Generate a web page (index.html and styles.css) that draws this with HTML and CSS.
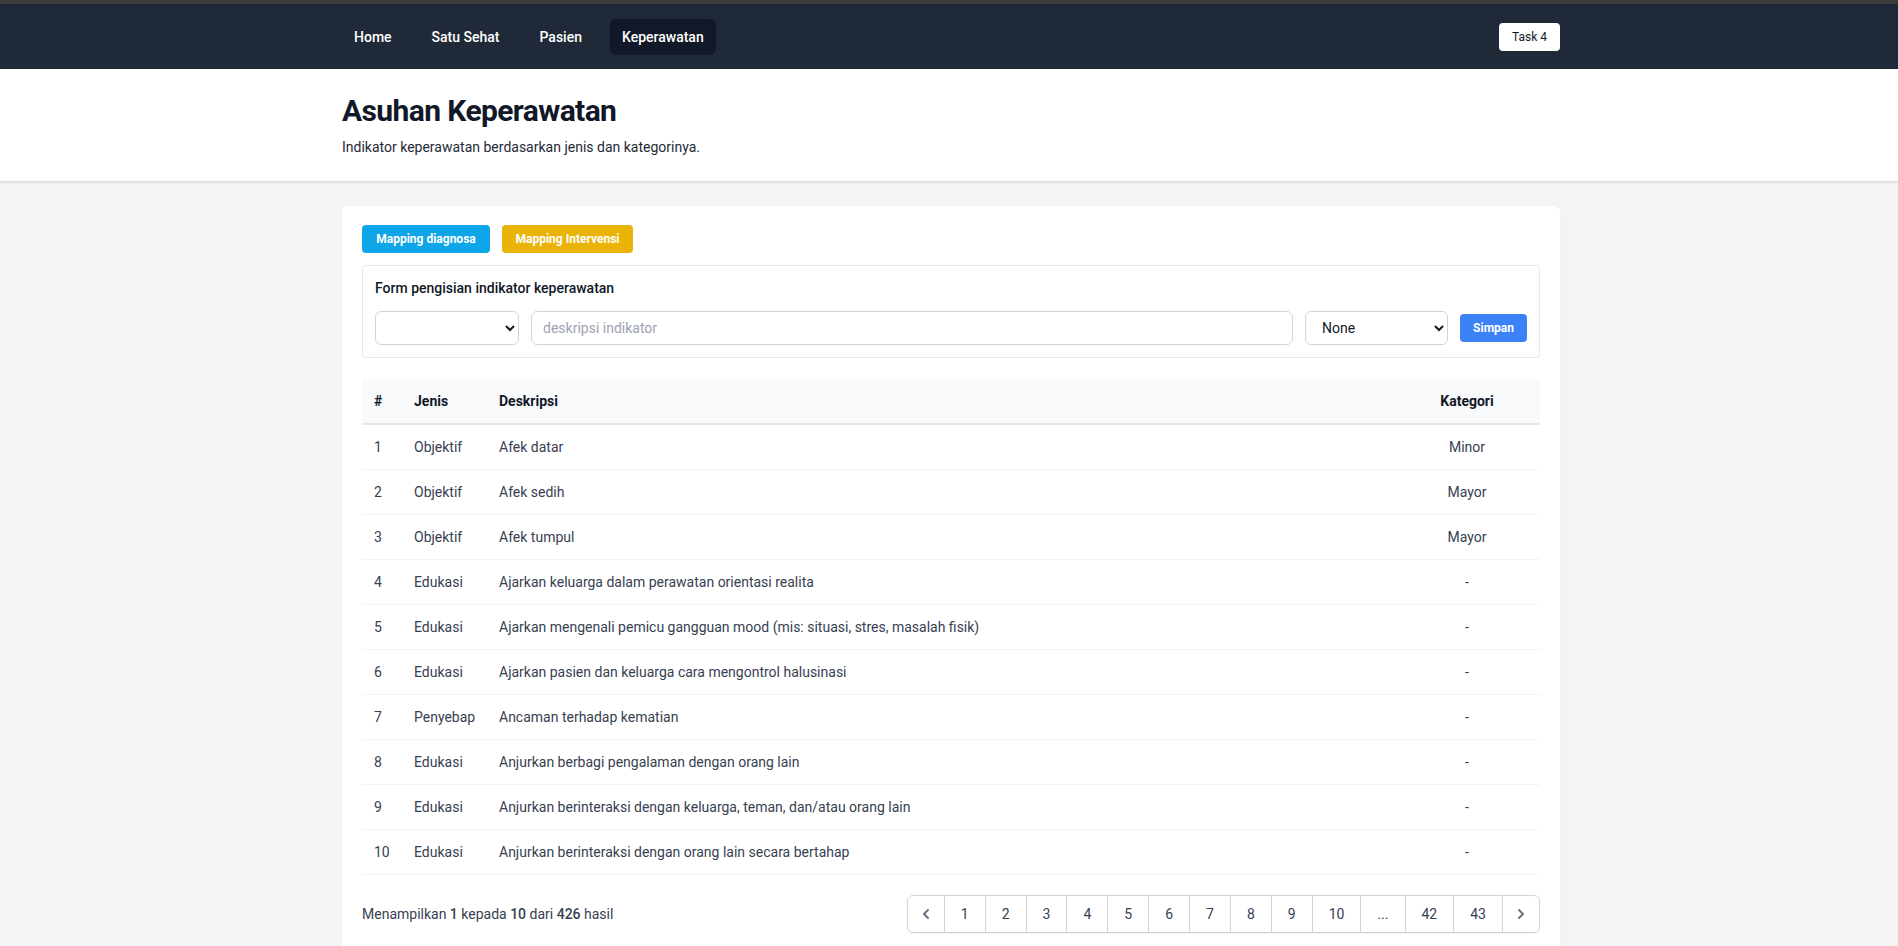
FILE: index.html
```html
<!DOCTYPE html>
<html lang="id">
<head>
<meta charset="utf-8">
<title>Asuhan Keperawatan</title>
<link rel="stylesheet" href="styles.css">
</head>
<body>
<div class="topstrip"></div>
<nav class="navbar">
  <div class="container nav-inner">
    <div class="nav-links">
      <a class="nav-link" href="#">Home</a>
      <a class="nav-link" href="#">Satu Sehat</a>
      <a class="nav-link" href="#">Pasien</a>
      <a class="nav-link active" href="#">Keperawatan</a>
    </div>
    <button class="task-btn">Task 4</button>
  </div>
</nav>
<header class="page-header">
  <div class="container header-inner">
    <h1>Asuhan Keperawatan</h1>
    <p>Indikator keperawatan berdasarkan jenis dan kategorinya.</p>
  </div>
</header>
<main class="main">
  <div class="container">
    <div class="card">
      <div class="btn-row">
        <button class="btn btn-sky">Mapping diagnosa</button>
        <button class="btn btn-yellow">Mapping Intervensi</button>
      </div>
      <div class="form-box">
        <div class="form-title">Form pengisian indikator keperawatan</div>
        <div class="form-row">
          <select class="select select-jenis"><option></option></select>
          <input class="input" type="text" placeholder="deskripsi indikator">
          <select class="select select-kat"><option>None</option></select>
          <button class="btn btn-blue">Simpan</button>
        </div>
      </div>
      <table class="table">
        <thead>
          <tr>
            <th class="col-no">#</th>
            <th class="col-jenis">Jenis</th>
            <th>Deskripsi</th>
            <th class="col-kat">Kategori</th>
          </tr>
        </thead>
        <tbody>
          <tr><td>1</td><td>Objektif</td><td>Afek datar</td><td class="center">Minor</td></tr>
          <tr><td>2</td><td>Objektif</td><td>Afek sedih</td><td class="center">Mayor</td></tr>
          <tr><td>3</td><td>Objektif</td><td>Afek tumpul</td><td class="center">Mayor</td></tr>
          <tr><td>4</td><td>Edukasi</td><td>Ajarkan keluarga dalam perawatan orientasi realita</td><td class="center">-</td></tr>
          <tr><td>5</td><td>Edukasi</td><td>Ajarkan mengenali pemicu gangguan mood (mis: situasi, stres, masalah fisik)</td><td class="center">-</td></tr>
          <tr><td>6</td><td>Edukasi</td><td>Ajarkan pasien dan keluarga cara mengontrol halusinasi</td><td class="center">-</td></tr>
          <tr><td>7</td><td>Penyebap</td><td>Ancaman terhadap kematian</td><td class="center">-</td></tr>
          <tr><td>8</td><td>Edukasi</td><td>Anjurkan berbagi pengalaman dengan orang lain</td><td class="center">-</td></tr>
          <tr><td>9</td><td>Edukasi</td><td>Anjurkan berinteraksi dengan keluarga, teman, dan/atau orang lain</td><td class="center">-</td></tr>
          <tr><td>10</td><td>Edukasi</td><td>Anjurkan berinteraksi dengan orang lain secara bertahap</td><td class="center">-</td></tr>
        </tbody>
      </table>
      <div class="pager-row">
        <p class="pager-info">Menampilkan <span class="strong">1</span> kepada <span class="strong">10</span> dari <span class="strong">426</span> hasil</p>
        <div class="pager">
          <span class="pg pg-arrow pg-first">
            <svg viewBox="0 0 20 20" width="20" height="20" fill="currentColor"><path fill-rule="evenodd" d="M12.707 5.293a1 1 0 010 1.414L9.414 10l3.293 3.293a1 1 0 01-1.414 1.414l-4-4a1 1 0 010-1.414l4-4a1 1 0 011.414 0z" clip-rule="evenodd"/></svg>
          </span>
          <span class="pg">1</span>
          <span class="pg">2</span>
          <span class="pg">3</span>
          <span class="pg">4</span>
          <span class="pg">5</span>
          <span class="pg">6</span>
          <span class="pg">7</span>
          <span class="pg">8</span>
          <span class="pg">9</span>
          <span class="pg">10</span>
          <span class="pg">...</span>
          <span class="pg">42</span>
          <span class="pg">43</span>
          <span class="pg pg-arrow pg-last">
            <svg viewBox="0 0 20 20" width="20" height="20" fill="currentColor"><path fill-rule="evenodd" d="M7.293 14.707a1 1 0 010-1.414L10.586 10 7.293 6.707a1 1 0 011.414-1.414l4 4a1 1 0 010 1.414l-4 4a1 1 0 01-1.414 0z" clip-rule="evenodd"/></svg>
          </span>
        </div>
      </div>
    </div>
  </div>
</main>
</body>
</html>
```
FILE: styles.css
```css
* { box-sizing: border-box; }
html, body { margin: 0; padding: 0; }
body {
  font-family: Roboto, "Liberation Sans", Arial, sans-serif;
  background: #f3f4f6;
  color: #111827;
  font-size: 14px;
  line-height: 20px;
}
.container {
  max-width: 1280px;
  margin: 0 auto;
  padding: 0 29px 0 33px;
}
.topstrip { height: 4px; background: #3c3c3c; }
.navbar { background: #1f2937; }
.nav-inner {
  height: 65px;
  display: flex;
  align-items: center;
  justify-content: space-between;
}
.nav-links { display: flex; gap: 16px; }
.nav-link {
  color: #ffffff;
  text-decoration: none;
  font-size: 14px;
  line-height: 20px;
  font-weight: 500;
  padding: 8px 12px;
  border-radius: 6px;
}
.nav-link.active { background: #111827; }
.task-btn {
  background: #ffffff;
  color: #111827;
  border: 0;
  border-radius: 4px;
  font-family: inherit;
  font-size: 12px;
  line-height: 16px;
  padding: 6px 0;
  height: 28px;
  width: 61px;
}
.page-header {
  background: #ffffff;
  box-shadow: 0 1px 3px rgba(0,0,0,0.1), 0 1px 2px rgba(0,0,0,0.06);
}
.header-inner { padding-top: 24px; padding-bottom: 24px; }
.page-header h1 {
  margin: 0;
  font-size: 30px;
  line-height: 36px;
  font-weight: 700;
  color: #111827;
  letter-spacing: -0.6px;
}
.page-header p {
  margin: 8px 0 0;
  font-size: 14px;
  line-height: 20px;
  color: #1f2937;
}
.main { padding: 25px 0 24px; }
.card {
  background: #ffffff;
  border-radius: 6px;
  box-shadow: 0 1px 2px rgba(0,0,0,0.05);
  padding: 19px 20px 20px;
}
.btn-row { display: flex; gap: 12px; }
.btn {
  border: 0;
  border-radius: 4px;
  color: #ffffff;
  font-family: inherit;
  font-size: 12px;
  line-height: 16px;
  font-weight: 700;
  padding: 6px 0;
  height: 28px;
  white-space: nowrap;
}
.btn-sky { background: #0ea5e9; width: 128px; }
.btn-yellow { background: #eab308; width: 131px; }
.btn-blue { background: #3b82f6; width: 67px; }
.form-box {
  margin-top: 12px;
  border: 1px solid #e5e7eb;
  border-radius: 4px;
  padding: 12px;
}
.form-title {
  font-size: 14px;
  line-height: 20px;
  font-weight: 500;
  color: #111827;
}
.form-row {
  margin-top: 13px;
  display: flex;
  align-items: center;
  gap: 12px;
}
.select {
  height: 34px;
  border: 1px solid #d1d5db;
  border-radius: 6px;
  background: #ffffff;
  font-family: inherit;
  font-size: 14px;
  color: #111827;
  padding: 0 6px 0 12px;
}
.select-jenis { width: 144px; }
.select-kat { width: 143px; }
.input {
  flex: 1;
  height: 34px;
  border: 1px solid #d1d5db;
  border-radius: 6px;
  padding: 0 11px;
  font-family: inherit;
  font-size: 14px;
  color: #111827;
}
.input::placeholder { color: #9ca3af; }
.table {
  margin-top: 21px;
  width: 100%;
  border-collapse: collapse;
  table-layout: fixed;
}
.table thead tr { background: #f9fafb; }
.table th {
  text-align: left;
  padding: 12px;
  font-size: 14px;
  line-height: 20px;
  font-weight: 700;
  color: #111827;
  border-bottom: 2px solid #e5e7eb;
}
.table th.col-no { width: 40px; }
.table th.col-jenis { width: 85px; }
.table th.col-kat { width: 146px; text-align: center; }
.table td {
  padding: 12px;
  font-size: 14px;
  line-height: 20px;
  color: #374151;
  border-bottom: 1px solid #f3f4f6;
}
.table td.center { text-align: center; }
.pager-row {
  margin-top: 20px;
  display: flex;
  align-items: center;
  justify-content: space-between;
}
.pager-info {
  margin: 0;
  font-size: 14px;
  line-height: 20px;
  color: #374151;
}
.strong { font-weight: 500; }
.pager {
  display: inline-flex;
  border-radius: 6px;
  box-shadow: 0 1px 2px rgba(0,0,0,0.05);
}
.pg {
  display: inline-flex;
  align-items: center;
  padding: 8px 16px;
  margin-left: -1px;
  border: 1px solid #d1d5db;
  background: #ffffff;
  color: #374151;
  font-size: 14px;
  line-height: 20px;
}
.pg-arrow { padding: 8px; color: #6b7280; }
.pg-first { margin-left: 0; border-radius: 6px 0 0 6px; }
.pg-last { border-radius: 0 6px 6px 0; }
```
